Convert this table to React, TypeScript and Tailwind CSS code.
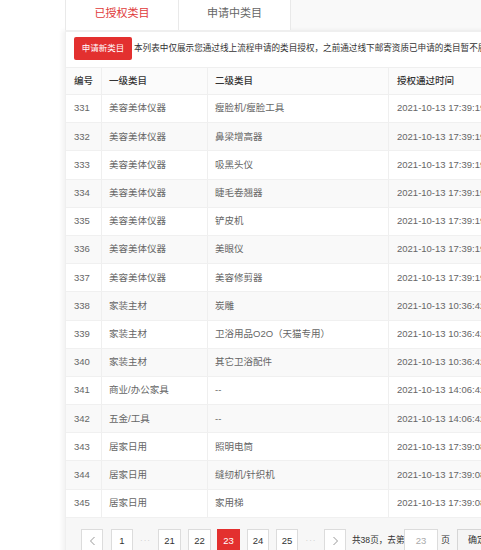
import React from "react";

const rows: [string, string, string, string][] = [
  ["331", "美容美体仪器", "瘦脸机/瘦脸工具", "2021-10-13 17:39:19"],
  ["332", "美容美体仪器", "鼻梁增高器", "2021-10-13 17:39:19"],
  ["333", "美容美体仪器", "吸黑头仪", "2021-10-13 17:39:19"],
  ["334", "美容美体仪器", "睫毛卷翘器", "2021-10-13 17:39:19"],
  ["335", "美容美体仪器", "铲皮机", "2021-10-13 17:39:19"],
  ["336", "美容美体仪器", "美眼仪", "2021-10-13 17:39:19"],
  ["337", "美容美体仪器", "美容修剪器", "2021-10-13 17:39:19"],
  ["338", "家装主材", "炭雕", "2021-10-13 10:36:42"],
  ["339", "家装主材", "卫浴用品O2O（天猫专用）", "2021-10-13 10:36:42"],
  ["340", "家装主材", "其它卫浴配件", "2021-10-13 10:36:42"],
  ["341", "商业/办公家具", "--", "2021-10-13 14:06:42"],
  ["342", "五金/工具", "--", "2021-10-13 14:06:42"],
  ["343", "居家日用", "照明电筒", "2021-10-13 17:39:08"],
  ["344", "居家日用", "缝纫机/针织机", "2021-10-13 17:39:08"],
  ["345", "居家日用", "家用梯", "2021-10-13 17:39:08"],
];

function PageBtn({
  children,
  active,
  className = "",
}: {
  children: React.ReactNode;
  active?: boolean;
  className?: string;
}) {
  return (
    <div
      className={
        "h-[24px] flex items-center justify-center text-[9.5px] border shrink-0 " +
        (active
          ? "bg-[#e3302f] border-[#e3302f] text-white "
          : "bg-white border-[#dcdcdc] text-[#333] ") +
        className
      }
    >
      {children}
    </div>
  );
}

function Dots() {
  return (
    <div className="flex items-center justify-center w-full text-[#c8c8c8] text-[8px] tracking-[1px]">
      ···
    </div>
  );
}

export default function App() {
  return (
    <div className="w-[481px] h-[550px] overflow-hidden bg-white font-['Liberation_Sans','Noto_Sans_CJK_SC',sans-serif]">
      <div className="ml-[65px] w-[560px]">
        {/* Tabs */}
        <div className="flex h-[30px] bg-[#f9f9f9]">
          <div className="w-[113px] bg-white border-l border-[#e9e9e9] flex items-center justify-center pb-[4px] text-[11px] text-[#e0393a]">
            已授权类目
          </div>
          <div className="w-[113px] bg-white border-l border-r border-[#e9e9e9] flex items-center justify-center pb-[4px] text-[11px] text-[#666]">
            申请中类目
          </div>
        </div>
        {/* Panel */}
        <div className="border-l border-t-2 border-[#efefef] shadow-[-3px_0_4px_rgba(0,0,0,0.05)] bg-white">
          <div className="flex items-center pl-[8px] pt-[5px] h-[35px] pb-[7px]">
            <div className="w-[58px] h-[23px] rounded-[2px] bg-[#e3302f] text-white text-[8.5px] flex items-center justify-center">
              申请新类目
            </div>
            <div className="ml-[2px] text-[8.6px] text-[#333] whitespace-nowrap">
              本列表中仅展示您通过线上流程申请的类目授权，之前通过线下邮寄资质已申请的类目暂不展示
            </div>
          </div>
          {/* Table */}
          <div className="border-t border-[#efefef]">
            <div className="grid grid-cols-[36px_106px_181px_1fr] h-[27px] bg-[#fbfbfb] border-b border-[#efefef] text-[9.5px] text-[#333] font-medium">
              <div className="pl-[8px] flex items-center border-r border-[#efefef]">编号</div>
              <div className="pl-[7px] flex items-center border-r border-[#efefef]">一级类目</div>
              <div className="pl-[7px] flex items-center border-r border-[#efefef]">二级类目</div>
              <div className="pl-[8px] flex items-center">授权通过时间</div>
            </div>
            {rows.map((r, i) => (
              <div
                key={r[0]}
                className={
                  "grid grid-cols-[36px_106px_181px_1fr] h-[28.2px] border-b border-[#f0f0f0] text-[9.5px] text-[#666] " +
                  (i % 2 === 1 ? "bg-[#f9f9f9]" : "bg-white")
                }
              >
                <div className="pl-[8px] flex items-center border-r border-[#efefef]">{r[0]}</div>
                <div className="pl-[7px] flex items-center border-r border-[#efefef]">{r[1]}</div>
                <div className="pl-[7px] flex items-center border-r border-[#efefef]">{r[2]}</div>
                <div className="pl-[8px] flex items-center whitespace-nowrap">{r[3]}</div>
              </div>
            ))}
          </div>
          {/* Pagination */}
          <div className="bg-[#f7f7f7] h-[40px] pt-[11px] flex items-start pl-[15px]">
            <PageBtn className="w-[22px] text-[#999]">
              <svg width="7" height="10" viewBox="0 0 7 10" fill="none">
                <path d="M5.5 1 L1.5 5 L5.5 9" stroke="#999" strokeWidth="1" />
              </svg>
            </PageBtn>
            <PageBtn className="w-[22px] ml-[8px]">1</PageBtn>
            <div className="w-[25px] h-[24px] flex items-center">
              <Dots />
            </div>
            <PageBtn className="w-[23px]">21</PageBtn>
            <PageBtn className="w-[23px] ml-[7px]">22</PageBtn>
            <PageBtn className="w-[23px] ml-[6px]" active>
              23
            </PageBtn>
            <PageBtn className="w-[22px] ml-[7px]">24</PageBtn>
            <PageBtn className="w-[22px] ml-[7px]">25</PageBtn>
            <div className="w-[26px] h-[24px] flex items-center">
              <Dots />
            </div>
            <PageBtn className="w-[22px]">
              <svg width="7" height="10" viewBox="0 0 7 10" fill="none">
                <path d="M1.5 1 L5.5 5 L1.5 9" stroke="#999" strokeWidth="1" />
              </svg>
            </PageBtn>
            <div className="ml-[6px] w-[52px] h-[24px] flex items-center text-[8.6px] text-[#333] whitespace-nowrap">
              共38页，去第
            </div>
            <div className="w-[34px] h-[24px] bg-white border border-[#dcdcdc] flex items-center justify-center text-[9.5px] text-[#aaa]">
              23
            </div>
            <div className="ml-[3px] h-[24px] flex items-center text-[9px] text-[#333]">页</div>
            <div className="ml-[7px] w-[40px] h-[24px] bg-[#f5f5f5] border border-[#d6d6d6] flex items-center justify-center text-[9px] text-[#333]">
              确定
            </div>
          </div>
        </div>
      </div>
    </div>
  );
}
